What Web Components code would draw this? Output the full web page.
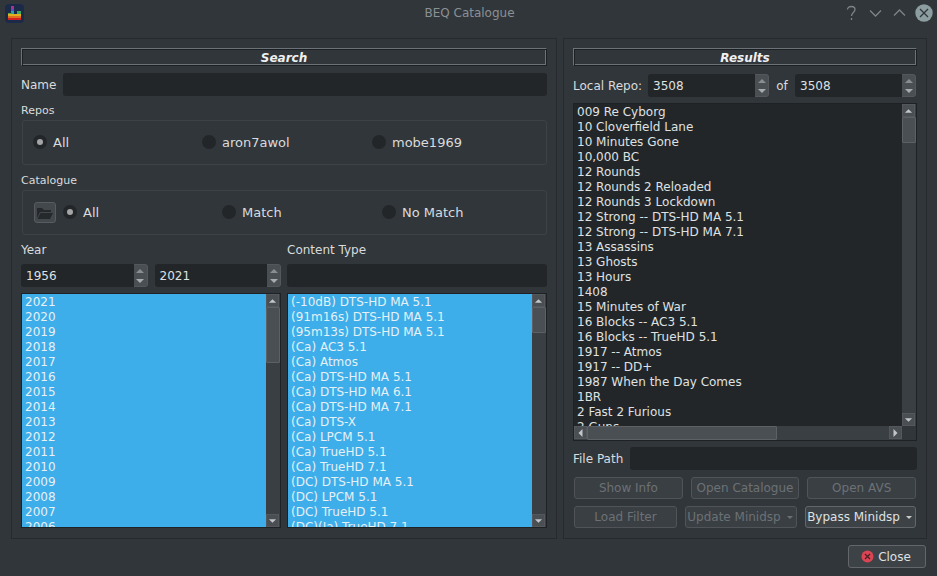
<!DOCTYPE html>
<html>
<head>
<meta charset="utf-8">
<title>BEQ Catalogue</title>
<style>
  html, body { margin: 0; padding: 0; background: #31363b; }
  body { font: 12px "DejaVu Sans", sans-serif; color: #eff0f1; }
</style>
</head>
<body>
<beq-app></beq-app>
<script>
const ARROW = {
  up: '<path d="M1 6 L5 2 L9 6 Z"/>',
  down: '<path d="M1 2 L9 2 L5 6 Z"/>',
  left: '<path d="M6 0 L2 4 L6 8 Z"/>',
  right: '<path d="M2 0 L6 4 L2 8 Z"/>'
};

class BeqTitleBar extends HTMLElement {
  constructor() {
    super();
    this.attachShadow({ mode: 'open' }).innerHTML = `
      <style>
        :host { display: grid; grid-template-columns: 1fr auto 1fr; align-items: center; height: 26px; padding: 0 4px 0 5px; }
        .logo { width: 19px; height: 19px; }
        .title { text-align: center; color: #8b9094; font-size: 12px; padding-left: 1px; }
        .btns { display: flex; align-items: center; gap: 7px; margin-top: -1px; justify-content: flex-end; }
        svg { display: block; }
      </style>
      <svg class="logo" viewBox="0 0 19 19">
        <rect width="19" height="19" rx="4" fill="#1c2a4a"/>
        <rect x="6" y="2" width="3" height="3" fill="#b0308f"/>
        <rect x="6" y="5" width="3" height="2" fill="#5a4fc0"/>
        <rect x="6" y="7" width="3" height="3" fill="#27a0b0"/>
        <rect x="3" y="9" width="3" height="1" fill="#5aa83c"/>
        <rect x="12" y="7" width="4" height="3" fill="#3fa860"/>
        <rect x="3" y="10" width="13" height="2" fill="#e0b020"/>
        <rect x="3" y="12" width="13" height="2" fill="#e07020"/>
        <rect x="3" y="14" width="13" height="2" fill="#d02020"/>
      </svg>
      <div class="title"><slot></slot></div>
      <div class="btns">
        <svg width="17" height="18" viewBox="0 0 17 18" fill="none" stroke="#7f8488" stroke-width="1.3">
          <path d="M4.5 5.5 C4.5 1.5 12 1.5 12 5.5 C12 8.5 8.5 8.5 8.5 12"/>
          <path d="M8.5 14 V16"/>
        </svg>
        <svg width="17" height="18" viewBox="0 0 17 18" fill="none" stroke="#7f8488" stroke-width="1.3">
          <path d="M3 6.5 L8.5 12 L14 6.5"/>
        </svg>
        <svg width="17" height="18" viewBox="0 0 17 18" fill="none" stroke="#7f8488" stroke-width="1.3">
          <path d="M3 11.5 L8.5 6 L14 11.5"/>
        </svg>
        <svg width="18" height="18" viewBox="0 0 18 18" fill="none" stroke="#31363b" stroke-width="1.3">
          <circle cx="9" cy="9" r="8.7" fill="#8d9ea1" stroke="none"/>
          <path d="M5 5 L13 13 M13 5 L5 13"/>
        </svg>
      </div>`;
  }
}

class BeqHeading extends HTMLElement {
  constructor() {
    super();
    this.attachShadow({ mode: 'open' }).innerHTML = `
      <style>
        :host {
          display: block; height: 16px; line-height: 18px; text-align: center;
          font-weight: bold; font-style: italic; font-size: 12px; color: #eff0f1;
          border: 1px solid #1d2023; border-top-color: #6b7378; border-left-color: #6b7378;
          box-shadow: inset 1px 1px 0 #1d2023, inset -1px -1px 0 #6b7378;
        }
      </style><slot></slot>`;
  }
}

class BeqField extends HTMLElement {
  constructor() {
    super();
    this.attachShadow({ mode: 'open' }).innerHTML = `
      <style>
        :host { display: block; height: 23px; background: #232629; border-radius: 3px; flex: 1; min-width: 0; }
      </style>`;
  }
}

class BeqSpin extends HTMLElement {
  constructor() {
    super();
    this.attachShadow({ mode: 'open' }).innerHTML = `
      <style>
        :host { display: flex; height: 23px; background: #232629; border-radius: 3px; box-sizing: border-box; }
        .val { flex: 1; line-height: 24px; padding-left: 5px; color: #dfe1e2; }
        .btns {
          width: 13px; display: flex; flex-direction: column; align-items: center; justify-content: center;
          gap: 2px; background: #4a4f54; border: 1px solid #54585c; border-left: 0; border-radius: 0 3px 3px 0;
        }
        svg { display: block; width: 10px; height: 8px; }
        .up { fill: #8a8e92; } .down { fill: #a9acaf; }
      </style>
      <div class="val"><slot></slot></div>
      <div class="btns">
        <svg class="up" viewBox="0 0 10 8">${ARROW.up}</svg>
        <svg class="down" viewBox="0 0 10 8">${ARROW.down}</svg>
      </div>`;
  }
}

class BeqRadio extends HTMLElement {
  constructor() {
    super();
    const on = this.hasAttribute('checked');
    this.attachShadow({ mode: 'open' }).innerHTML = `
      <style>
        :host { display: flex; align-items: center; gap: 6px; color: #d9dbdc; font-size: 13px; }
        .c {
          width: 14px; height: 14px; border-radius: 50%; background: #232629;
          display: flex; align-items: center; justify-content: center;
        }
        .d { width: 6px; height: 6px; border-radius: 50%; background: #a3a5a7; }
      </style>
      <span class="c">${on ? '<span class="d"></span>' : ''}</span><span><slot></slot></span>`;
  }
}

class BeqGroup extends HTMLElement {
  constructor() {
    super();
    this.attachShadow({ mode: 'open' }).innerHTML = `
      <style>
        :host { display: block; }
        .t { font-size: 11px; line-height: 14px; color: #d9dbdc; height: 17px; padding-top: 1px; box-sizing: border-box; }
        .b {
          margin-left: 1px; height: 45px; box-sizing: border-box; border: 1px solid #3d4246; border-radius: 3px;
          display: flex; align-items: center; padding: 0 0 1px 11px;
        }
      </style>
      <div class="t">${this.getAttribute('label')}</div>
      <div class="b"><slot></slot></div>`;
  }
}

class BeqScrollbar extends HTMLElement {
  constructor() {
    super();
    const h = this.getAttribute('orient') === 'h';
    const start = this.getAttribute('start') || 0;
    const size = this.getAttribute('size');
    const a1 = h ? ARROW.left : ARROW.up;
    const a2 = h ? ARROW.right : ARROW.down;
    this.attachShadow({ mode: 'open' }).innerHTML = `
      <style>
        :host {
          display: flex; flex: none; background: #3a3f43;
          flex-direction: ${h ? 'row' : 'column'};
          ${h ? 'height: 14px;' : 'width: 14px;'}
        }
        .btn {
          flex: none; width: 13px; height: 13px; background: #4a4f54; border: 1px solid #54585c;
          box-sizing: border-box; display: flex; align-items: center; justify-content: center;
        }
        .btn svg { width: 9px; height: 8px; fill: #c4c6c8; display: block; }
        .track { flex: 1; display: flex; flex-direction: ${h ? 'row' : 'column'}; min-width: 0; min-height: 0; }
        .thumb {
          flex: none; box-sizing: border-box; background: #4a4f54; border: 1px solid #5d6165; border-radius: 1px;
          ${h ? `width: ${size}px; margin-left: ${start}px;` : `height: ${size}px; margin-top: ${start}px;`}
        }
      </style>
      <div class="btn"><svg viewBox="0 0 ${h ? '8 8' : '10 8'}">${a1}</svg></div>
      <div class="track"><div class="thumb"></div></div>
      <div class="btn"><svg viewBox="0 0 ${h ? '8 8' : '10 8'}">${a2}</svg></div>`;
  }
}

class BeqList extends HTMLElement {
  constructor() {
    super();
    const sel = this.hasAttribute('selected');
    const rows = this.getAttribute('items').split('|').map(t => `<div class="r">${t}</div>`).join('');
    const horiz = this.hasAttribute('hsize')
      ? `<div class="hrow"><beq-scrollbar orient="h" size="${this.getAttribute('hsize')}"></beq-scrollbar><div class="corner"></div></div>` : '';
    this.attachShadow({ mode: 'open' }).innerHTML = `
      <style>
        :host { display: flex; flex-direction: column; box-sizing: border-box; border: 1px solid #1f2225; background: #232629; overflow: hidden; }
        .main { flex: 1; display: flex; min-height: 0; }
        .rows { flex: 1; overflow: hidden; background: ${sel ? '#3daee9' : '#232629'}; color: ${sel ? '#e6f0f5' : '#dfe1e2'}; padding-top: 1px; min-width: 0; }
        .r { height: 15px; line-height: 15px; padding-left: 3px; white-space: nowrap; }
        .hrow { display: flex; flex: none; }
        .hrow beq-scrollbar { flex: 1; }
        .corner { width: 14px; background: #31363b; flex: none; }
      </style>
      <div class="main">
        <div class="rows">${rows}</div>
        <beq-scrollbar start="${this.getAttribute('start') || 0}" size="${this.getAttribute('vsize')}"></beq-scrollbar>
      </div>${horiz}`;
  }
}

class BeqButton extends HTMLElement {
  constructor() {
    super();
    const dis = this.hasAttribute('disabled');
    const menu = this.hasAttribute('menu');
    this.attachShadow({ mode: 'open' }).innerHTML = `
      <style>
        :host {
          display: flex; align-items: center; justify-content: center; gap: 4px; box-sizing: border-box; height: 22px;
          background: ${dis ? '#3a3f44' : '#3d4247'}; border: 1px solid ${dis ? '#505458' : '#63676b'}; border-radius: 3px;
          color: ${dis ? '#6c7175' : '#dfe1e2'}; white-space: nowrap; ${menu ? 'padding-right: 2px;' : ''}
        }
        .caret { border: 3px solid transparent; border-top: 3px solid ${dis ? '#6c7175' : '#c8cacc'}; border-bottom: 0; margin-left: 2px; }
      </style>
      <slot name="icon"></slot><span><slot></slot></span>${menu ? '<span class="caret"></span>' : ''}`;
  }
}

class BeqSearch extends HTMLElement {
  constructor() {
    super();
    const years = [];
    for (let y = 2021; y >= 2006; y--) years.push(y);
    const types = ['(-10dB) DTS-HD MA 5.1', '(91m16s) DTS-HD MA 5.1', '(95m13s) DTS-HD MA 5.1', '(Ca) AC3 5.1', '(Ca) Atmos',
      '(Ca) DTS-HD MA 5.1', '(Ca) DTS-HD MA 6.1', '(Ca) DTS-HD MA 7.1', '(Ca) DTS-X', '(Ca) LPCM 5.1', '(Ca) TrueHD 5.1',
      '(Ca) TrueHD 7.1', '(DC) DTS-HD MA 5.1', '(DC) LPCM 5.1', '(DC) TrueHD 5.1', '(DC)(Ia) TrueHD 7.1'];
    this.attachShadow({ mode: 'open' }).innerHTML = `
      <style>
        :host {
          display: flex; flex-direction: column; box-sizing: border-box; width: 546px; height: 501px;
          padding: 9px 9px 10px 9px; border: 1px solid #26292d; 
        }
        .name { display: flex; align-items: center; gap: 7px; margin-top: 7px; margin-bottom: 7px; color: #d9dbdc; }
        beq-group + beq-group { margin-top: 8px; }
        .tri { display: grid; width: 100%; }
        .tri.a { grid-template-columns: 169px 170px 1fr; margin-left: -1px; }
        .tri.b { grid-template-columns: 159px 160px 1fr; }
        .folder {
          flex: none; width: 22px; height: 21px; box-sizing: border-box; background: #43484c; border: 1px solid #585c60; border-radius: 3px;
          display: flex; align-items: center; justify-content: center; margin: 1px 7px 0 0;
        }
        .labels { display: flex; gap: 6px; margin-top: 8px; height: 21px; line-height: 14px; color: #d9dbdc; }
        .labels span { width: 260px; }
        .inputs { display: flex; gap: 6px; height: 23px; }
        .years { width: 260px; display: flex; gap: 7px; flex: none; }
        .years beq-spin { flex: 1; }
        .lists { display: flex; gap: 6px; margin-top: 6px; flex: 1; min-height: 0; }
        .lists beq-list { flex: 1; min-width: 0; }
      </style>
      <beq-heading>Search</beq-heading>
      <div class="name"><span>Name</span><beq-field></beq-field></div>
      <beq-group label="Repos">
        <div class="tri a">
          <beq-radio checked>All</beq-radio><beq-radio>aron7awol</beq-radio><beq-radio>mobe1969</beq-radio>
        </div>
      </beq-group>
      <beq-group label="Catalogue">
        <div class="folder">
          <svg width="18" height="14" viewBox="0 0 18 14">
            <path d="M1 2 H6 L8 4 H15 V6 H4 L1 12 Z" fill="#26292c"/>
            <path d="M4.5 7 H17 L14 13 H1.5 Z" fill="#26292c"/>
          </svg>
        </div>
        <div class="tri b">
          <beq-radio checked>All</beq-radio><beq-radio>Match</beq-radio><beq-radio>No Match</beq-radio>
        </div>
      </beq-group>
      <div class="labels"><span>Year</span><span>Content Type</span></div>
      <div class="inputs">
        <div class="years"><beq-spin>1956</beq-spin><beq-spin>2021</beq-spin></div>
        <beq-field></beq-field>
      </div>
      <div class="lists">
        <beq-list selected items="${years.join('|')}" vsize="56"></beq-list>
        <beq-list selected items="${types.join('|')}" vsize="26"></beq-list>
      </div>`;
  }
}

class BeqResults extends HTMLElement {
  constructor() {
    super();
    const titles = ['009 Re Cyborg', '10 Cloverfield Lane', '10 Minutes Gone', '10,000 BC', '12 Rounds', '12 Rounds 2 Reloaded',
      '12 Rounds 3 Lockdown', '12 Strong -- DTS-HD MA 5.1', '12 Strong -- DTS-HD MA 7.1', '13 Assassins', '13 Ghosts', '13 Hours',
      '1408', '15 Minutes of War', '16 Blocks -- AC3 5.1', '16 Blocks -- TrueHD 5.1', '1917 -- Atmos', '1917 -- DD+',
      '1987 When the Day Comes', '1BR', '2 Fast 2 Furious', '2 Guns'];
    this.attachShadow({ mode: 'open' }).innerHTML = `
      <style>
        :host {
          display: flex; flex-direction: column; box-sizing: border-box; width: 364px; height: 501px;
          padding: 9px 9px 10px 9px; border: 1px solid #26292d;
        }
        .repo { display: flex; align-items: center; margin-top: 8px; color: #d9dbdc; }
        .repo beq-spin { width: 121px; flex: none; }
        .repo .l { width: 75px; flex: none; }
        .repo .of { width: 26px; flex: none; text-align: center; }
        beq-list { margin-top: 6px; height: 338px; flex: none; }
        .path { display: flex; align-items: center; gap: 7px; margin-top: 6px; color: #d9dbdc; }
        .row { display: flex; gap: 8px; margin-left: 1px; margin-right: 1px; }
        .row.a { margin-top: 7px; }
        .row.b { margin-top: 7px; }
        .row.a beq-button { flex: 1; }
      </style>
      <beq-heading>Results</beq-heading>
      <div class="repo"><span class="l">Local Repo:</span><beq-spin>3508</beq-spin><span class="of">of</span><beq-spin>3508</beq-spin></div>
      <beq-list items="${titles.join('|')}" vsize="26" hsize="190"></beq-list>
      <div class="path"><span>File Path</span><beq-field></beq-field></div>
      <div class="row a">
        <beq-button disabled>Show Info</beq-button><beq-button disabled>Open Catalogue</beq-button><beq-button disabled>Open AVS</beq-button>
      </div>
      <div class="row b">
        <beq-button disabled style="width:103px">Load Filter</beq-button>
        <beq-button disabled menu style="width:112px">Update Minidsp</beq-button>
        <beq-button menu style="width:111px">Bypass Minidsp</beq-button>
      </div>`;
  }
}

class BeqApp extends HTMLElement {
  constructor() {
    super();
    this.attachShadow({ mode: 'open' }).innerHTML = `
      <style>
        :host { display: flex; flex-direction: column; width: 937px; height: 576px; overflow: hidden; background: #31363b; }
        .panels { display: flex; gap: 6px; margin: 12px 0 0 11px; }
        .foot { display: flex; justify-content: flex-end; padding: 6px 11px 0 0; }
        .close { width: 78px; height: 23px; padding-right: 2px; }
        .close svg { display: block; }
      </style>
      <beq-title-bar>BEQ Catalogue</beq-title-bar>
      <div class="panels"><beq-search></beq-search><beq-results></beq-results></div>
      <div class="foot">
        <beq-button class="close">
          <svg slot="icon" width="13" height="13" viewBox="0 0 13 13">
            <circle cx="6.5" cy="6.5" r="6" fill="#da4453"/>
            <path d="M4 4 L9 9 M9 4 L4 9" stroke="#4a2026" stroke-width="1.2"/>
          </svg>Close</beq-button>
      </div>`;
  }
}

customElements.define('beq-title-bar', BeqTitleBar);
customElements.define('beq-heading', BeqHeading);
customElements.define('beq-field', BeqField);
customElements.define('beq-spin', BeqSpin);
customElements.define('beq-radio', BeqRadio);
customElements.define('beq-group', BeqGroup);
customElements.define('beq-scrollbar', BeqScrollbar);
customElements.define('beq-list', BeqList);
customElements.define('beq-button', BeqButton);
customElements.define('beq-search', BeqSearch);
customElements.define('beq-results', BeqResults);
customElements.define('beq-app', BeqApp);
</script>
</body>
</html>
